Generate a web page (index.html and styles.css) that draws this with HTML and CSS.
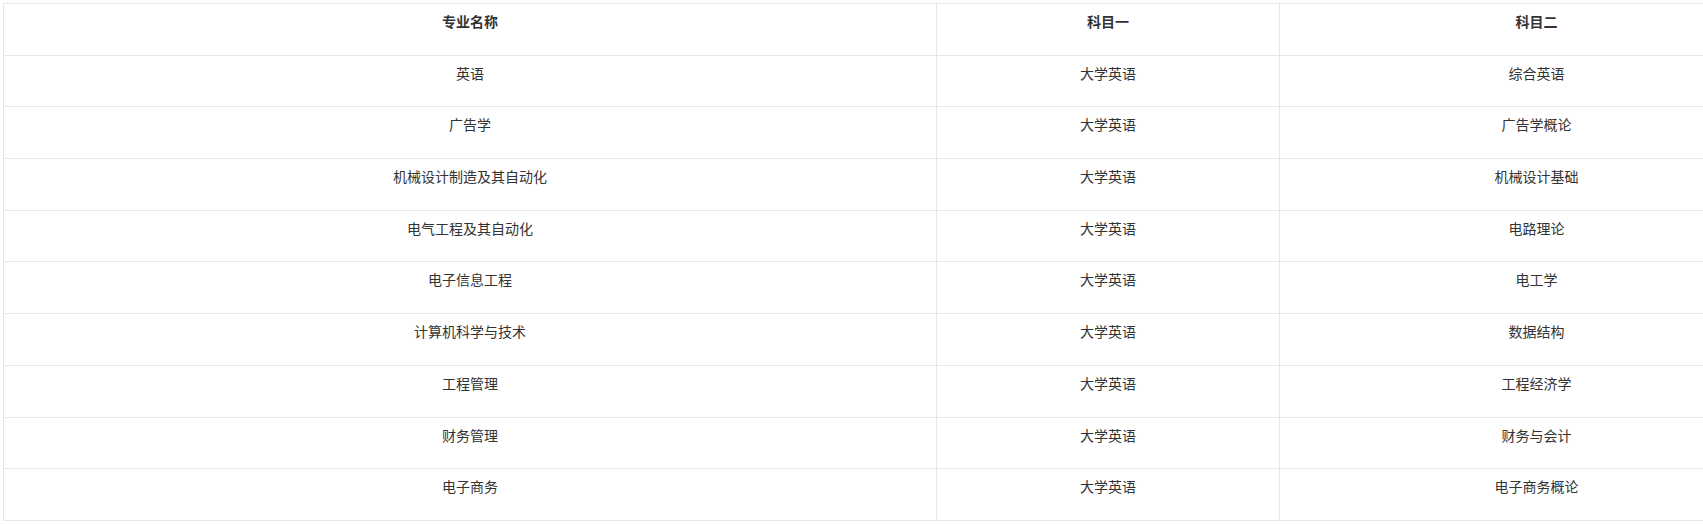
FILE: index.html
```html
<!DOCTYPE html>
<html lang="zh-CN">
<head>
<meta charset="utf-8">
<title>专业科目</title>
<link rel="stylesheet" href="styles.css">
</head>
<body>
<div class="wrap">
<table class="subjects">
  <colgroup>
    <col class="c1"><col class="c2"><col class="c3">
  </colgroup>
  <thead>
    <tr><th>专业名称</th><th>科目一</th><th>科目二</th></tr>
  </thead>
  <tbody>
    <tr><td>英语</td><td>大学英语</td><td>综合英语</td></tr>
    <tr><td>广告学</td><td>大学英语</td><td>广告学概论</td></tr>
    <tr><td>机械设计制造及其自动化</td><td>大学英语</td><td>机械设计基础</td></tr>
    <tr><td>电气工程及其自动化</td><td>大学英语</td><td>电路理论</td></tr>
    <tr><td>电子信息工程</td><td>大学英语</td><td>电工学</td></tr>
    <tr><td>计算机科学与技术</td><td>大学英语</td><td>数据结构</td></tr>
    <tr><td>工程管理</td><td>大学英语</td><td>工程经济学</td></tr>
    <tr><td>财务管理</td><td>大学英语</td><td>财务与会计</td></tr>
    <tr><td>电子商务</td><td>大学英语</td><td>电子商务概论</td></tr>
  </tbody>
</table>
</div>
</body>
</html>
```

FILE: styles.css
```css
html, body {
  margin: 0;
  padding: 0;
  background: #fff;
}
body {
  font-family: "Noto Sans CJK SC", "Microsoft YaHei", "Noto Sans", sans-serif;
  font-size: 14px;
  color: #333;
}
.wrap {
  padding: 3px 0 0 3px;
}
.subjects {
  border-collapse: collapse;
  table-layout: fixed;
  width: 1790px;
}
.subjects .c1 { width: 933px; }
.subjects .c2 { width: 343px; }
.subjects .c3 { width: 514px; }
.subjects th,
.subjects td {
  border: 1px solid #e6e6e6;
  text-align: center;
  vertical-align: top;
  padding: 7px 10px 0;
  height: 51.7px;
  box-sizing: border-box;
  line-height: 20px;
  font-weight: normal;
}
.subjects th {
  font-weight: bold;
}
```
